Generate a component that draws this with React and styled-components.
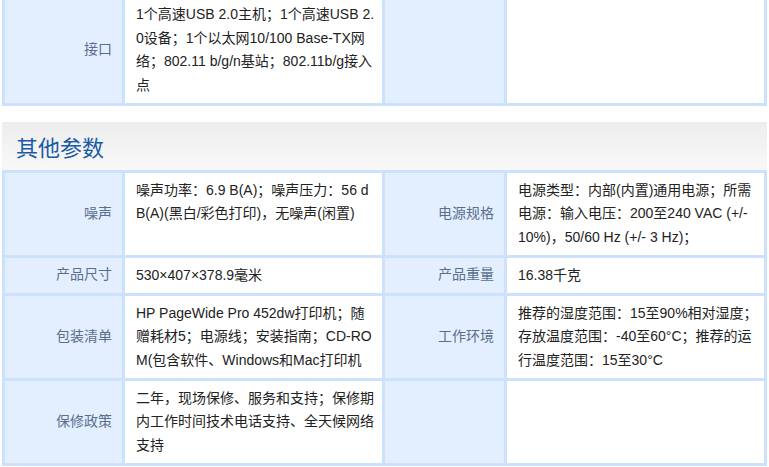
import React from 'react';
import styled, { createGlobalStyle } from 'styled-components';

const GlobalStyle = createGlobalStyle`
  html, body {
    margin: 0;
    padding: 0;
    background: #ffffff;
    overflow: hidden;
  }
`;

const Page = styled.div`
  width: 765px;
  padding-left: 2px;
  font-family: "Liberation Sans", "Noto Sans CJK SC", sans-serif;
  font-size: 14px;
`;

const SpecGrid = styled.div`
  display: grid;
  grid-template-columns: 117px 257px 119px 257px;
  gap: 3px;
  padding: 3px;
  background: #cce1fb;
  margin-top: ${(p) => (p.$cut ? '-6px' : '0')};
`;

const Label = styled.div`
  background: #e3efff;
  color: #5a6e8c;
  display: flex;
  align-items: center;
  justify-content: flex-end;
  padding-right: 10px;
  line-height: 23.5px;
`;

const Value = styled.div`
  background: #ffffff;
  color: #222222;
  padding: 6px 6px 5.5px 11px;
  line-height: 23.5px;
`;

const Line = styled.div`
  white-space: nowrap;
`;

const SectionTitle = styled.div`
  margin-top: 16px;
  height: 48px;
  display: flex;
  align-items: center;
  padding-left: 14px;
  background: linear-gradient(#ededed, #f8f8f8);
  color: #1a5ba6;
  font-family: "Noto Sans CJK SC", sans-serif;
  font-size: 22px;
`;

const topRows = [
  {
    label: '接口',
    lines: [
      '1个高速USB 2.0主机；1个高速USB 2.',
      '0设备；1个以太网10/100 Base-TX网',
      '络；802.11 b/g/n基站；802.11b/g接入',
      '点',
    ],
    label2: '',
    lines2: [],
  },
];

const otherRows = [
  {
    label: '噪声',
    lines: ['噪声功率：6.9 B(A)；噪声压力：56 d', 'B(A)(黑白/彩色打印)，无噪声(闲置)'],
    label2: '电源规格',
    lines2: [
      '电源类型：内部(内置)通用电源；所需',
      '电源：输入电压：200至240 VAC (+/-',
      '10%)，50/60 Hz (+/- 3 Hz)；',
    ],
  },
  {
    label: '产品尺寸',
    lines: ['530×407×378.9毫米'],
    label2: '产品重量',
    lines2: ['16.38千克'],
  },
  {
    label: '包装清单',
    lines: [
      'HP PageWide Pro 452dw打印机；随',
      '赠耗材5；电源线；安装指南；CD-RO',
      'M(包含软件、Windows和Mac打印机',
    ],
    label2: '工作环境',
    lines2: [
      '推荐的湿度范围：15至90%相对湿度；',
      '存放温度范围：-40至60°C；推荐的运',
      '行温度范围：15至30°C',
    ],
  },
  {
    label: '保修政策',
    lines: [
      '二年，现场保修、服务和支持；保修期',
      '内工作时间技术电话支持、全天候网络',
      '支持',
    ],
    label2: '',
    lines2: [],
  },
];

const SpecRows = ({ rows }) =>
  rows.map((row, i) => (
    <React.Fragment key={i}>
      <Label>{row.label}</Label>
      <Value>
        {row.lines.map((l, j) => (
          <Line key={j}>{l}</Line>
        ))}
      </Value>
      <Label>{row.label2}</Label>
      <Value>
        {row.lines2.map((l, j) => (
          <Line key={j}>{l}</Line>
        ))}
      </Value>
    </React.Fragment>
  ));

const App = () => (
  <Page>
    <GlobalStyle />
    <SpecGrid $cut>
      <SpecRows rows={topRows} />
    </SpecGrid>
    <SectionTitle>其他参数</SectionTitle>
    <SpecGrid>
      <SpecRows rows={otherRows} />
    </SpecGrid>
  </Page>
);

export default App;
